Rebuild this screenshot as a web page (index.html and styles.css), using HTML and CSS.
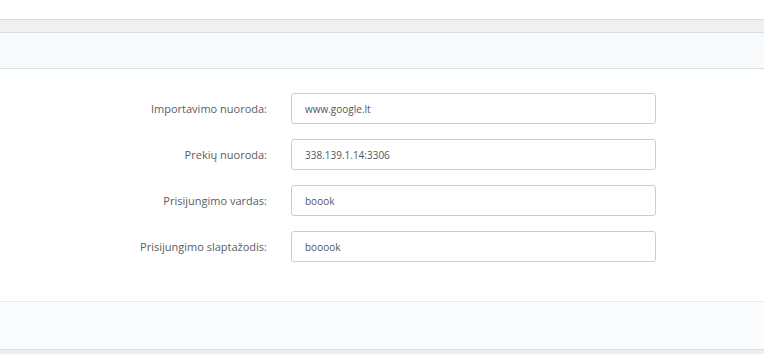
FILE: index.html
```html
<!DOCTYPE html>
<html lang="lt">
<head>
    <meta charset="UTF-8">
    <title>Importavimo nustatymai</title>
    <link rel="stylesheet" href="styles.css">
</head>
<body>

    <div class="topbar"></div>
    <div class="toolbar"></div>

    <div class="panel">
        <div class="panel-heading"></div>

        <div class="panel-body">
            <div class="form-row">
                <label for="importUrl">Importavimo nuoroda:</label>
                <input type="text" id="importUrl" value="www.google.lt">
            </div>
            <div class="form-row">
                <label for="productUrl">Prekių nuoroda:</label>
                <input type="text" id="productUrl" value="338.139.1.14:3306">
            </div>
            <div class="form-row">
                <label for="username">Prisijungimo vardas:</label>
                <input type="text" id="username" value="boook">
            </div>
            <div class="form-row">
                <label for="password">Prisijungimo slaptažodis:</label>
                <input type="text" id="password" value="booook">
            </div>
        </div>

        <div class="panel-footer"></div>
    </div>

    <div class="bottombar"></div>

</body>
</html>
```

FILE: styles.css
```css
body {
    margin: 0;
    font-family: 'Open Sans', sans-serif;
    background: #ffffff;
    color: #5c5d5f;
}
.topbar {
    height: 19px;
    background: #ffffff;
    border-bottom: 1px solid #dcdcdc;
}
.toolbar {
    height: 12px;
    background: #eff0f2;
    border-bottom: 1px solid #d5e0e5;
}
.panel-heading {
    height: 35px;
    background: #f8fafb;
    border-bottom: 1px solid #d6e3e8;
}
.panel-body {
    padding: 24px 0 39px;
    display: flex;
    flex-direction: column;
    gap: 15px;
}
.form-row {
    display: grid;
    grid-template-columns: 267px 365px;
    column-gap: 24px;
    align-items: center;
}
label {
    text-align: right;
    font-size: 11px;
    color: #5c5d5f;
}
input {
    box-sizing: border-box;
    height: 31px;
    padding: 0 13px;
    border: 1px solid #c4d0d7;
    border-radius: 3px;
    background: #fff;
    font-family: 'Open Sans', sans-serif;
    font-size: 10px;
    color: #555658;
    outline: none;
}
.panel-footer {
    height: 47px;
    background: #fbfcfd;
    border-top: 1px solid #e8e9ea;
    border-bottom: 1px solid #dcdddf;
}
.bottombar {
    height: 10px;
    background: #eceef0;
}
```
